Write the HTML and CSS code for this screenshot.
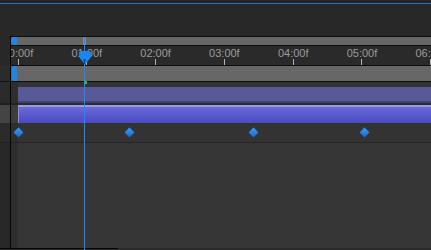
FILE: index.html
```html
<!DOCTYPE html>
<html lang="en">
<head>
    <meta charset="UTF-8">
    <meta name="viewport" content="width=device-width, initial-scale=1.0">
    <title>Timeline</title>
    <link rel="stylesheet" href="styles.css">
</head>
<body>

    <div class="top-strip"></div>
    <div class="panel-head"></div>

    <div class="timeline">
        <div class="gutter">
            <div class="g-nav"></div>
            <div class="g-ruler"></div>
            <div class="g-work"></div>
            <div class="g-layer"></div>
            <div class="g-sep"></div>
            <div class="g-layer selected"></div>
            <div class="g-keys"></div>
            <div class="g-rest"></div>
        </div>
        <div class="divider"></div>
        <div class="tracks">
            <div class="nav-bar">
                <span class="handle"></span>
                <span class="nav-mark"></span>
            </div>
            <div class="ruler">
                <div class="ruler-row">
                    <div class="mark"><span class="label">00:00f</span><span class="tick"></span></div>
                    <div class="mark"><span class="label">01:00f</span><span class="tick"></span></div>
                    <div class="mark"><span class="label">02:00f</span><span class="tick"></span></div>
                    <div class="mark"><span class="label">03:00f</span><span class="tick"></span></div>
                    <div class="mark"><span class="label">04:00f</span><span class="tick"></span></div>
                    <div class="mark"><span class="label">05:00f</span><span class="tick"></span></div>
                    <div class="mark"><span class="label">06:00f</span><span class="tick"></span></div>
                </div>
            </div>
            <div class="work-bar">
                <span class="handle"></span>
            </div>
            <div class="layers">
                <div class="strip">
                    <div class="s-layer"></div>
                    <div class="s-sep"></div>
                    <div class="s-layer selected"></div>
                    <div class="s-keys"></div>
                    <div class="s-rest"></div>
                </div>
                <div class="lanes">
                    <div class="lane lane-a"><div class="bar bar-a"></div></div>
                    <div class="lane-sep"></div>
                    <div class="lane lane-b"><div class="bar bar-b"></div></div>
                    <div class="lane key-lane">
                        <span class="key" style="left: 0px"></span>
                        <span class="key" style="left: 111px"></span>
                        <span class="key" style="left: 235px"></span>
                        <span class="key" style="left: 346px"></span>
                    </div>
                    <div class="lane-rest"></div>
                </div>
            </div>
        </div>
    </div>

    <div class="scroll">
        <div class="scroll-line"></div>
    </div>

    <!-- playhead lies over everything -->
    <div class="playhead"></div>
    <svg class="playhead-head" width="12" height="13" viewBox="0 0 12 13">
        <path d="M2 0 H10 Q12 0 12 2 V6 L6.5 13 H5.5 L0 6 V2 Q0 0 2 0 Z" fill="#1a86f0"/>
        <path d="M4 9 H7 M5.5 9 V13" stroke="#0b3e74" stroke-width="1" fill="none"/>
    </svg>
    <div class="cache-mark"></div>

</body>
</html>
```

FILE: styles.css
```css
body {
    margin: 0;
    width: 431px;
    height: 250px;
    overflow: hidden;
    position: relative;
    background-color: #282828;
    font-family: "Liberation Sans", Arial, sans-serif;
}

.top-strip {
    height: 3px;
    background-color: #252525;
    border-bottom: 1px solid #1b74c8;
}

.panel-head {
    height: 32px;
    background-color: #282828;
}

.timeline {
    display: flex;
    height: 212px;
}

/* left gutter, x 0-9 */
.gutter {
    width: 10px;
    display: flex;
    flex-direction: column;
}

.g-nav {
    height: 10px;
    background-color: #282828;
}

.g-ruler {
    height: 19px;
    background-color: #282828;
}

.g-work {
    height: 16px;
    background-color: #2b2b2b;
    border-bottom: 1px solid #111;
}

.g-layer {
    height: 21px;
    background-color: #2b2b2b;
}

.g-layer.selected {
    height: 18px;
    background-color: #444;
}

.g-sep {
    height: 2px;
    background-color: #1e1e1e;
}

.g-keys {
    height: 19px;
    background-color: #2b2b2b;
    border-bottom: 1px solid #222;
}

.g-rest {
    flex: 1;
    background-color: #282828;
}

.divider {
    width: 1px;
    background-color: #050505;
}

.tracks {
    flex: 1;
    display: flex;
    flex-direction: column;
    min-width: 0;
}

.nav-bar {
    height: 8px;
    border-top: 1px solid #0c0c0c;
    border-bottom: 1px solid #0c0c0c;
    background-color: #676767;
    position: relative;
    display: flex;
}

.handle {
    width: 6px;
    background-color: #1a86f0;
    border-radius: 4px 0 0 4px;
}

.nav-mark {
    position: absolute;
    left: 72px;
    top: 0;
    width: 3px;
    height: 8px;
    background-color: #8a8a8a;
}

.ruler {
    height: 19px;
    background-color: #2a2a2a;
    overflow: hidden;
}

.ruler-row {
    display: flex;
    margin-left: -27.4px;
    padding-top: 2px;
}

.mark {
    flex: 0 0 68.8px;
    display: flex;
    flex-direction: column;
    align-items: center;
}

.label {
    font-size: 11px;
    line-height: 11px;
    color: #9c9c9c;
    white-space: nowrap;
}

.tick {
    width: 1px;
    height: 6px;
    background-color: #b4b4b4;
}

.work-bar {
    height: 15px;
    border-top: 1px solid #0c0c0c;
    border-bottom: 1px solid #0c0c0c;
    background-color: #676767;
    display: flex;
    padding-left: 1px;
}

.work-bar .handle {
    width: 5px;
    border-radius: 3px 0 0 3px;
}

.layers {
    flex: 1;
    display: flex;
}

.strip {
    width: 7px;
    display: flex;
    flex-direction: column;
}

.s-layer {
    height: 21px;
    background-color: #2e2e2e;
}

.s-layer.selected {
    height: 18px;
    background-color: #3c3c3c;
}

.s-sep {
    height: 2px;
    background-color: #222;
}

.s-keys {
    height: 19px;
    background-color: #2e2e2e;
    border-bottom: 1px solid #222;
}

.s-rest {
    flex: 1;
    background-color: #2e2e2e;
}

.lanes {
    flex: 1;
    display: flex;
    flex-direction: column;
}

.lane {
    background-color: #333;
}

.lane-a {
    height: 21px;
    padding-top: 5px;
    box-sizing: border-box;
}

.bar-a {
    height: 16px;
    box-sizing: border-box;
    background-color: #585a98;
    border-bottom: 2px solid #414373;
}

.lane-sep {
    height: 2px;
    background-color: #2c2c2c;
}

.lane-b {
    height: 18px;
}

.bar-b {
    height: 18px;
    box-sizing: border-box;
    background: linear-gradient(#6a6ad8, #4a4ac4);
    border-top: 2px solid #9b9be2;
    border-left: 1px solid #8c8cd4;
}

.key-lane {
    height: 19px;
    position: relative;
    border-bottom: 1px solid #262626;
}

.key {
    position: absolute;
    top: 5.5px;
    margin-left: -3.5px;
    width: 7px;
    height: 7px;
    transform: rotate(45deg);
    background: linear-gradient(135deg, #3b9cff, #1068d0);
}

.lane-rest {
    flex: 1;
    background-color: #363636;
}

.scroll {
    height: 2px;
    background-color: #2a2a2a;
}

.scroll-line {
    width: 118px;
    height: 1px;
    background-color: #050505;
}

.playhead {
    position: absolute;
    left: 84px;
    top: 37px;
    bottom: 0;
    width: 1px;
    background-color: #1a8cff;
}

.playhead-head {
    position: absolute;
    left: 79px;
    top: 51px;
}

.cache-mark {
    position: absolute;
    left: 85px;
    top: 81px;
    width: 2px;
    height: 3px;
    background-color: #19d419;
}
```
